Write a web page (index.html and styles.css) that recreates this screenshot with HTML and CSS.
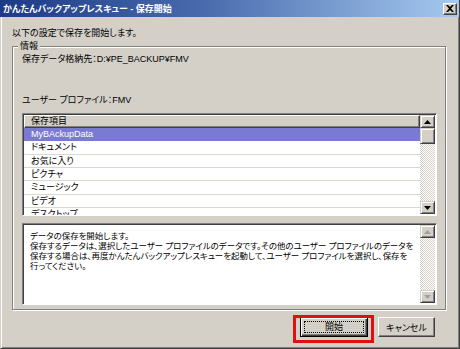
FILE: index.html
```html
<!DOCTYPE html>
<html lang="ja">
<head>
<meta charset="utf-8">
<link rel="stylesheet" href="styles.css">
</head>
<body>
<div class="window">
  <div class="titlebar">
    <span class="title">かんたんバックアップレスキュー - 保存開始</span>
    <span class="close"><svg width="8" height="7" viewBox="0 0 8 7"><path d="M0 0h2l2 2 2-2h2L5 3.5 8 7H6L4 5 2 7H0l3-3.5z" fill="#000"/></svg></span>
  </div>
  <div class="content">
    <p class="intro">以下の設定で保存を開始します。</p>
    <fieldset class="group">
      <legend>情報</legend>
      <div class="label l1">保存データ格納先：D:¥PE_BACKUP¥FMV</div>
      <div class="label l2">ユーザー プロファイル：FMV</div>
      <div class="listview">
        <div class="lv-main">
          <div class="lv-header"><span class="hcell">保存項目</span></div>
          <div class="row sel">MyBAckupData</div>
          <div class="row">ドキュメント</div>
          <div class="row">お気に入り</div>
          <div class="row">ピクチャ</div>
          <div class="row">ミュージック</div>
          <div class="row">ビデオ</div>
          <div class="row">デスクトップ</div>
        </div>
        <div class="vscroll">
          <span class="sbtn"><svg width="7" height="4" viewBox="0 0 7 4"><path d="M3.5 0L7 4H0z" fill="#000"/></svg></span>
          <span class="sthumb"></span>
          <span class="strack"></span>
          <span class="sbtn"><svg width="7" height="4" viewBox="0 0 7 4"><path d="M0 0h7L3.5 4z" fill="#000"/></svg></span>
        </div>
      </div>
      <div class="textbox">
        <div class="tb-text">データの保存を開始します。<br>保存するデータは、選択したユーザー プロファイルのデータです。その他のユーザー プロファイルのデータを<br>保存する場合は、再度かんたんバックアップレスキューを起動して、ユーザー プロファイルを選択し、保存を<br>行ってください。</div>
        <div class="vscroll">
          <span class="sbtn off"><svg width="7" height="4" viewBox="0 0 7 4"><path d="M3.5 0L7 4H0z" fill="#a0a0a0"/></svg></span>
          <span class="strack"></span>
          <span class="sbtn off"><svg width="7" height="4" viewBox="0 0 7 4"><path d="M0 0h7L3.5 4z" fill="#a0a0a0"/></svg></span>
        </div>
      </div>
    </fieldset>
    <div class="buttons">
      <div class="hl-wrap">
        <button class="btn default"><span class="focus">開始</span></button>
        <span class="highlight"></span>
      </div>
      <button class="btn cancel">キャンセル</button>
    </div>
  </div>
</div>
</body>
</html>
```

FILE: styles.css
```css
* { box-sizing: border-box; }
html, body { margin: 0; padding: 0; }
body {
  width: 460px;
  height: 349px;
  overflow: hidden;
  background: #d4d0c8;
  font-family: "Liberation Sans", "Noto Sans CJK JP", sans-serif;
  font-size: 9px;
  font-feature-settings: "palt";
  color: #000;
}
.window {
  width: 460px;
  height: 349px;
  display: flex;
  flex-direction: column;
  background: #d4d0c8;
  border: 1px solid;
  border-top: 0;
  border-color: #d4d0c8 #404040 #404040 #d4d0c8;
  box-shadow: inset 1px 0 #fff, inset -1px -1px #808080;
}
.titlebar {
  height: 17px;
  margin: 0 0 0 -1px;
  width: 459px;
  display: flex;
  align-items: center;
  justify-content: space-between;
  padding: 0 2px 0 3px;
  background: linear-gradient(to right, #1c3a86 0%, #4a6cae 45%, #a6caf0 100%);
}
.title {
  color: #fff;
  font-weight: bold;
  font-size: 9px;
  line-height: 12px;
  white-space: nowrap;
}
.close {
  width: 14px;
  height: 12px;
  display: flex;
  align-items: center;
  justify-content: center;
  background: #d4d0c8;
  border: 1px solid;
  border-color: #fff #404040 #404040 #fff;
  box-shadow: inset -1px -1px #808080;
}
.content {
  flex: 1;
  display: flex;
  flex-direction: column;
  padding: 0 0 0 11px;
}
.intro {
  margin: 10px 0 1px;
  line-height: 12px;
}
.group {
  width: 434px;
  margin: 0;
  padding: 0 8px 4px 9px;
  border: 1px solid #808080;
  box-shadow: inset 1px 1px #fff, 1px 1px #fff;
}
.group legend {
  padding: 0 2px;
  margin-left: -4px;
  line-height: 12px;
  background: #d4d0c8;
}
.label {
  line-height: 12px;
  white-space: nowrap;
}
.l1 { margin-top: 1px; }
.l2 { margin-top: 29px; }
.listview {
  margin-top: 7px;
  height: 103px;
  display: flex;
  background: #fff;
  border: 1px solid;
  border-color: #808080 #fff #fff #808080;
  box-shadow: inset 1px 1px #404040;
}
.lv-main {
  flex: 1;
  padding: 1px 0 0 1px;
  overflow: hidden;
}
.lv-header {
  display: flex;
  height: 13px;
}
.hcell {
  flex: 1;
  padding-left: 6px;
  background: #d4d0c8;
  border: 1px solid;
  border-color: #fff #404040 #404040 #fff;
  box-shadow: inset -1px -1px #808080;
  line-height: 11px;
}
.row {
  height: 13.33px;
  line-height: 12px;
  padding-left: 7px;
  border-bottom: 1px solid #dcd8d0;
  white-space: nowrap;
}
.row.sel {
  background: #7a7ad2;
  color: #fff;
  border-bottom-color: #7a7ad2;
}
.vscroll {
  width: 16px;
  display: flex;
  flex-direction: column;
  padding: 1px 1px 1px 0;
}
.sbtn, .sthumb {
  display: flex;
  align-items: center;
  justify-content: center;
  background: #d4d0c8;
  border: 1px solid;
  border-color: #d4d0c8 #404040 #404040 #d4d0c8;
  box-shadow: inset 1px 1px #fff, inset -1px -1px #808080;
}
.sbtn { height: 13px; }
.sthumb { height: 16px; }
.strack {
  flex: 1;
  background: repeating-conic-gradient(#fff 0 25%, #d4d0c8 0 50%) 0 0 / 2px 2px;
}
.textbox {
  margin-top: 7px;
  height: 82px;
  display: flex;
  background: #fff;
  border: 1px solid;
  border-color: #808080 #fff #fff #808080;
  box-shadow: inset 1px 1px #404040;
}
.tb-text {
  flex: 1;
  padding: 7px 0 0 7px;
  font-size: 8.45px;
  line-height: 10px;
  white-space: nowrap;
  overflow: hidden;
}
.buttons {
  display: flex;
  justify-content: flex-end;
  gap: 10px;
  margin-top: 7px;
  padding-right: 24px;
}
.hl-wrap {
  position: relative;
  display: flex;
}
.btn {
  height: 20px;
  margin: 0;
  padding: 0;
  font: inherit;
  color: #000;
  background: #d4d0c8;
  border: 1px solid;
  border-color: #fff #404040 #404040 #fff;
  box-shadow: inset -1px -1px #808080;
  display: flex;
  align-items: center;
  justify-content: center;
}
.btn.default {
  width: 68px;
  border: 1px solid #000;
  box-shadow: inset 1px 1px #fff, inset -1px -1px #404040, inset -2px -2px #808080;
  padding: 3px;
}
.focus {
  flex: 1;
  align-self: stretch;
  display: flex;
  align-items: center;
  justify-content: center;
  border: 1px dotted #000;
  line-height: 10px;
}
.btn.cancel { width: 57px; }
.highlight {
  position: absolute;
  left: -7px;
  right: -6px;
  top: -2px;
  bottom: -6px;
  border: 3px solid #e01010;
  pointer-events: none;
}
```
